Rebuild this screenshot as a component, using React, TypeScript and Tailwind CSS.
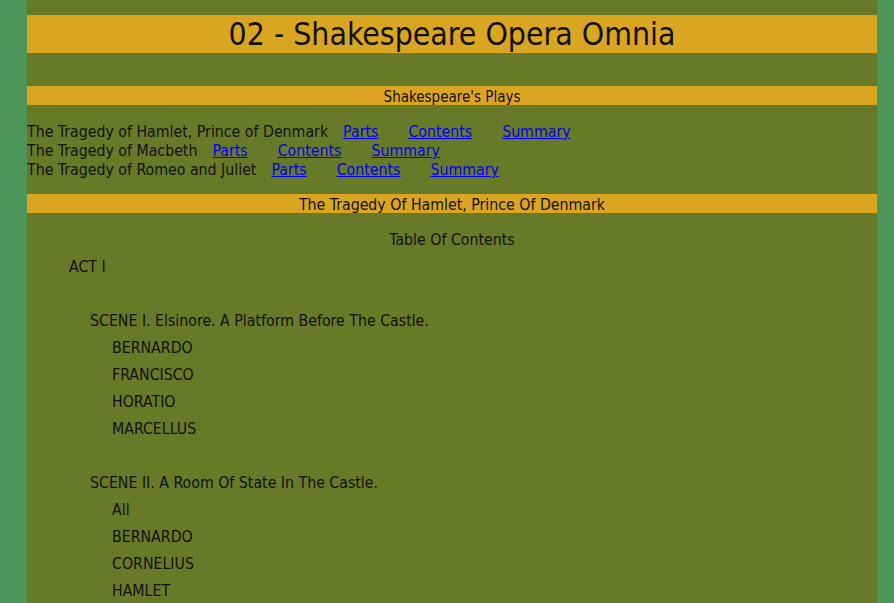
const plays = [
  "The Tragedy of Hamlet, Prince of Denmark",
  "The Tragedy of Macbeth",
  "The Tragedy of Romeo and Juliet",
];

type Line = { text: string; level: number };

const toc: Line[] = [
  { text: "ACT I", level: 1 },
  { text: "", level: 0 },
  { text: "SCENE I. Elsinore. A Platform Before The Castle.", level: 2 },
  { text: "BERNARDO", level: 3 },
  { text: "FRANCISCO", level: 3 },
  { text: "HORATIO", level: 3 },
  { text: "MARCELLUS", level: 3 },
  { text: "", level: 0 },
  { text: "SCENE II. A Room Of State In The Castle.", level: 2 },
  { text: "All", level: 3 },
  { text: "BERNARDO", level: 3 },
  { text: "CORNELIUS", level: 3 },
  { text: "HAMLET", level: 3 },
];

const indent: Record<number, string> = {
  0: "pl-0",
  1: "pl-[42px]",
  2: "pl-[63px]",
  3: "pl-[85px]",
};

export default function App() {
  return (
    <div
      className="min-h-screen bg-[#4e955a] pl-[27px] pr-[17px] text-[15.75px] text-[#111]"
      style={{ fontFamily: '"DejaVu Sans Condensed", "DejaVu Sans", sans-serif' }}
    >
      <div className="min-h-[603px] bg-[#687a28] pt-[15px]">
        <h1 className="flex h-[38px] items-center justify-center bg-[#daa520] pt-[2px] text-[31.7px] font-normal">
          02 - Shakespeare Opera Omnia
        </h1>

        <div className="mt-[33px] flex h-[19px] items-center justify-center bg-[#daa520] pt-[3px] text-[15px]">
          Shakespeare's Plays
        </div>

        <div className="mt-[17px] leading-[19px]">
          {plays.map((play) => (
            <div key={play} className="flex h-[19px] items-center">
              <span>{play}</span>
              <a href="#" className="ml-[15px] text-[#0000ee] underline">
                Parts
              </a>
              <a href="#" className="ml-[30px] text-[#0000ee] underline">
                Contents
              </a>
              <a href="#" className="ml-[30px] text-[#0000ee] underline">
                Summary
              </a>
            </div>
          ))}
        </div>

        <div className="mt-[15px] flex h-[19px] items-center justify-center bg-[#daa520] pt-[2px]">
          The Tragedy Of Hamlet, Prince Of Denmark
        </div>

        <div className="pt-[13px]">
          <div className="flex h-[27px] items-center justify-center">Table Of Contents</div>
          {toc.map((line, i) => (
            <div key={i} className={`flex h-[27px] items-center ${indent[line.level]}`}>
              {line.text}
            </div>
          ))}
        </div>
      </div>
    </div>
  );
}
